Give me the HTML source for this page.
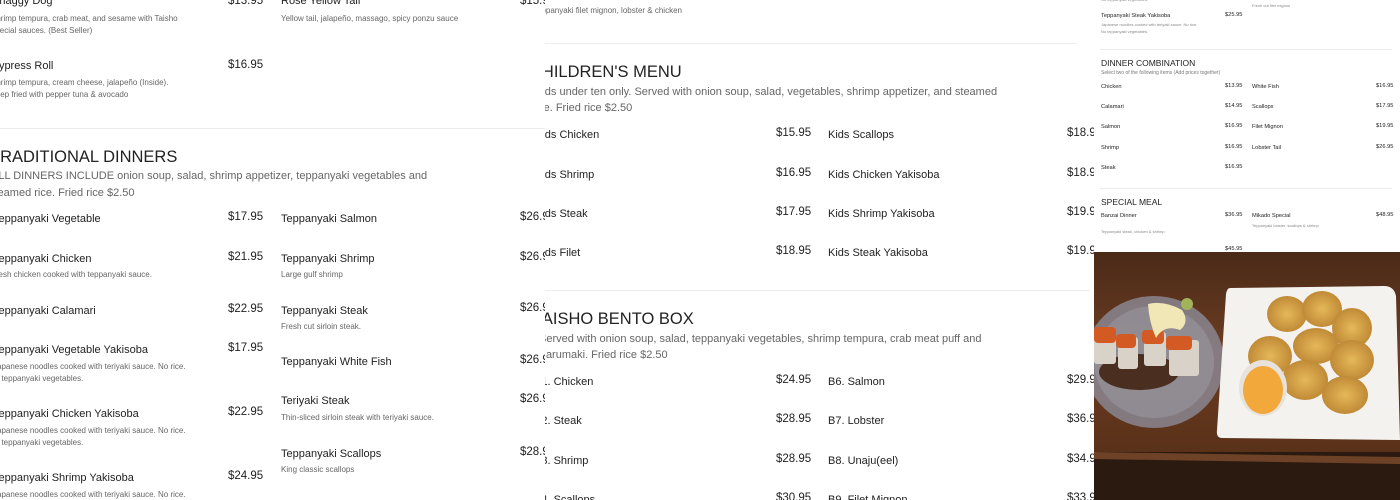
<!DOCTYPE html>
<html><head><meta charset="utf-8"><style>
*{margin:0;padding:0;box-sizing:border-box}
body{width:1400px;height:500px;overflow:hidden;background:#fff;font-family:"Liberation Sans",Arial,sans-serif;color:#222;position:relative}
.p{position:absolute;top:0;height:500px;overflow:hidden;background:#fff}
.t{position:absolute;white-space:nowrap;line-height:1}
.n{font-size:11px;color:#222}
.pr{font-size:11.5px;color:#222}
.d{font-size:8px;color:#666}
.h{font-size:16.5px;color:#222}
.s{font-size:11px;color:#666}
.hr{position:absolute;height:1px;background:#ececec}
.r .n,.r .pr{font-size:5.7px}
.r .d{font-size:4px;color:#888}
.r .h{font-size:8.5px}
.r .s{font-size:5px;color:#777}
</style></head><body>

<div class="p" style="left:0;width:545px">
<div class="t n" style="left:-8px;top:-4px">Shaggy Dog</div>
<div class="t pr" style="left:228px;top:-4px">$13.95</div>
<div class="t d" style="left:-9px;top:15px">Shrimp tempura, crab meat, and sesame with Taisho</div>
<div class="t d" style="left:-10px;top:27px">Special sauces. (Best Seller)</div>
<div class="t n" style="left:281px;top:-4px">Rose Yellow Tail</div>
<div class="t pr" style="left:520px;top:-4px">$15.95</div>
<div class="t d" style="left:281px;top:15px">Yellow tail, jalapeño, massago, spicy ponzu sauce</div>
<div class="t n" style="left:-9px;top:61px">Cypress Roll</div>
<div class="t pr" style="left:228px;top:60px">$16.95</div>
<div class="t d" style="left:-9px;top:79px">Shrimp tempura, cream cheese, jalapeño (Inside).</div>
<div class="t d" style="left:-10px;top:91px">Deep fried with pepper tuna &amp; avocado</div>
<div class="hr" style="left:0;width:545px;top:128px"></div>
<div class="t h" style="left:-10px;top:149px">TRADITIONAL DINNERS</div>
<div class="t s" style="left:-9px;top:171px">ALL DINNERS INCLUDE onion soup, salad, shrimp appetizer, teppanyaki vegetables and</div>
<div class="t s" style="left:-11px;top:188px">steamed rice. Fried rice $2.50</div>

<div class="t n" style="left:-7px;top:214px">Teppanyaki Vegetable</div><div class="t pr" style="left:228px;top:212px">$17.95</div>
<div class="t n" style="left:-7px;top:254px">Teppanyaki Chicken</div><div class="t pr" style="left:228px;top:252px">$21.95</div>
<div class="t d" style="left:-9px;top:271px">Fresh chicken cooked with teppanyaki sauce.</div>
<div class="t n" style="left:-7px;top:306px">Teppanyaki Calamari</div><div class="t pr" style="left:228px;top:304px">$22.95</div>
<div class="t n" style="left:-7px;top:345px">Teppanyaki Vegetable Yakisoba</div><div class="t pr" style="left:228px;top:343px">$17.95</div>
<div class="t d" style="left:-7px;top:363px">Japanese noodles cooked with teriyaki sauce. No rice.</div>
<div class="t d" style="left:-11px;top:375px">No teppanyaki vegetables.</div>
<div class="t n" style="left:-7px;top:409px">Teppanyaki Chicken Yakisoba</div><div class="t pr" style="left:228px;top:407px">$22.95</div>
<div class="t d" style="left:-7px;top:427px">Japanese noodles cooked with teriyaki sauce. No rice.</div>
<div class="t d" style="left:-11px;top:439px">No teppanyaki vegetables.</div>
<div class="t n" style="left:-7px;top:473px">Teppanyaki Shrimp Yakisoba</div><div class="t pr" style="left:228px;top:471px">$24.95</div>
<div class="t d" style="left:-7px;top:491px">Japanese noodles cooked with teriyaki sauce. No rice.</div>

<div class="t n" style="left:281px;top:214px">Teppanyaki Salmon</div><div class="t pr" style="left:520px;top:212px">$26.95</div>
<div class="t n" style="left:281px;top:254px">Teppanyaki Shrimp</div><div class="t pr" style="left:520px;top:252px">$26.95</div>
<div class="t d" style="left:281px;top:271px">Large gulf shrimp</div>
<div class="t n" style="left:281px;top:306px">Teppanyaki Steak</div><div class="t pr" style="left:520px;top:303px">$26.95</div>
<div class="t d" style="left:281px;top:323px">Fresh cut sirloin steak.</div>
<div class="t n" style="left:281px;top:357px">Teppanyaki White Fish</div><div class="t pr" style="left:520px;top:355px">$26.95</div>
<div class="t n" style="left:281px;top:396px">Teriyaki Steak</div><div class="t pr" style="left:520px;top:394px">$26.95</div>
<div class="t d" style="left:281px;top:414px">Thin-sliced sirloin steak with teriyaki sauce.</div>
<div class="t n" style="left:281px;top:449px">Teppanyaki Scallops</div><div class="t pr" style="left:520px;top:447px">$28.95</div>
<div class="t d" style="left:281px;top:466px">King classic scallops</div>
</div>

<div class="p" style="left:545px;width:549px">
<div style="position:absolute;left:-13px;top:0;width:560px;height:500px">
<div class="t d" style="left:1px;top:7px">Teppanyaki filet mignon, lobster &amp; chicken</div>
<div class="hr" style="left:13px;width:532px;top:43px"></div>
<div class="t h" style="left:-2px;top:64px">CHILDREN'S MENU</div>
<div class="t s" style="left:3px;top:87px">Kids under ten only. Served with onion soup, salad, vegetables, shrimp appetizer, and steamed</div>
<div class="t s" style="left:0;top:103px">rice. Fried rice $2.50</div>
</div>
<div style="position:absolute;left:-10px;top:0;width:560px;height:500px">
<div class="t n" style="left:0;top:130px">Kids Chicken</div><div class="t pr" style="left:241px;top:128px">$15.95</div>
<div class="t n" style="left:0;top:170px">Kids Shrimp</div><div class="t pr" style="left:241px;top:168px">$16.95</div>
<div class="t n" style="left:0;top:209px">Kids Steak</div><div class="t pr" style="left:241px;top:207px">$17.95</div>
<div class="t n" style="left:0;top:248px">Kids Filet</div><div class="t pr" style="left:241px;top:246px">$18.95</div>
<div class="t n" style="left:293px;top:130px">Kids Scallops</div><div class="t pr" style="left:532px;top:128px">$18.95</div>
<div class="t n" style="left:293px;top:170px">Kids Chicken Yakisoba</div><div class="t pr" style="left:532px;top:168px">$18.95</div>
<div class="t n" style="left:293px;top:209px">Kids Shrimp Yakisoba</div><div class="t pr" style="left:532px;top:207px">$19.95</div>
<div class="t n" style="left:293px;top:248px">Kids Steak Yakisoba</div><div class="t pr" style="left:532px;top:246px">$19.95</div>
</div>
<div class="hr" style="left:0;width:545px;top:290px"></div>
<div style="position:absolute;left:-8px;top:0;width:560px;height:500px">
<div class="t h" style="left:-4px;top:311px">TAISHO BENTO BOX</div>
<div class="t s" style="left:2px;top:334px">Served with onion soup, salad, teppanyaki vegetables, shrimp tempura, crab meat puff and</div>
<div class="t s" style="left:1px;top:350px">Harumaki. Fried rice $2.50</div>
<div class="t n" style="left:-3px;top:377px">B1. Chicken</div><div class="t pr" style="left:239px;top:375px">$24.95</div>
<div class="t n" style="left:-3px;top:416px">B2. Steak</div><div class="t pr" style="left:239px;top:414px">$28.95</div>
<div class="t n" style="left:-3px;top:456px">B3. Shrimp</div><div class="t pr" style="left:239px;top:454px">$28.95</div>
<div class="t n" style="left:-3px;top:495px">B4. Scallops</div><div class="t pr" style="left:239px;top:493px">$30.95</div>
<div class="t n" style="left:291px;top:377px">B6. Salmon</div><div class="t pr" style="left:530px;top:375px">$29.95</div>
<div class="t n" style="left:291px;top:416px">B7. Lobster</div><div class="t pr" style="left:530px;top:414px">$36.95</div>
<div class="t n" style="left:291px;top:456px">B8. Unaju(eel)</div><div class="t pr" style="left:530px;top:454px">$34.95</div>
<div class="t n" style="left:291px;top:495px">B9. Filet Mignon</div><div class="t pr" style="left:530px;top:493px">$33.95</div>
</div>
</div>

<div class="p r" style="left:1094px;width:306px;height:252px">
<div class="t d" style="left:7px;top:-2px">No teppanyaki vegetables.</div>
<div class="t d" style="left:158px;top:4px">Fresh cut filet mignon</div>
<div class="t n" style="left:7px;top:14px">Teppanyaki Steak Yakisoba</div><div class="t pr" style="left:131px;top:13px">$25.95</div>
<div class="t d" style="left:7px;top:23px">Japanese noodles cooked with teriyaki sauce. No rice.</div>
<div class="t d" style="left:7px;top:30px">No teppanyaki vegetables.</div>
<div class="hr" style="left:6px;width:292px;top:49px"></div>
<div class="t h" style="left:7px;top:59px">DINNER COMBINATION</div>
<div class="t s" style="left:7px;top:71px">Select two of the following items (Add prices together)</div>
<div class="t n" style="left:7px;top:85px">Chicken</div><div class="t pr" style="left:131px;top:84px">$13.95</div>
<div class="t n" style="left:7px;top:105px">Calamari</div><div class="t pr" style="left:131px;top:104px">$14.95</div>
<div class="t n" style="left:7px;top:125px">Salmon</div><div class="t pr" style="left:131px;top:124px">$16.95</div>
<div class="t n" style="left:7px;top:146px">Shrimp</div><div class="t pr" style="left:131px;top:145px">$16.95</div>
<div class="t n" style="left:7px;top:166px">Steak</div><div class="t pr" style="left:131px;top:165px">$16.95</div>
<div class="t n" style="left:158px;top:85px">White Fish</div><div class="t pr" style="left:282px;top:84px">$16.95</div>
<div class="t n" style="left:158px;top:105px">Scallops</div><div class="t pr" style="left:282px;top:104px">$17.95</div>
<div class="t n" style="left:158px;top:125px">Filet Mignon</div><div class="t pr" style="left:282px;top:124px">$19.95</div>
<div class="t n" style="left:158px;top:146px">Lobster Tail</div><div class="t pr" style="left:282px;top:145px">$26.95</div>
<div class="hr" style="left:6px;width:292px;top:188px"></div>
<div class="t h" style="left:7px;top:198px">SPECIAL MEAL</div>
<div class="t n" style="left:7px;top:214px">Banzai Dinner</div><div class="t pr" style="left:131px;top:213px">$36.95</div>
<div class="t d" style="left:7px;top:230px">Teppanyaki steak, chicken &amp; shrimp</div>
<div class="t n" style="left:158px;top:214px">Mikado Special</div><div class="t pr" style="left:282px;top:213px">$48.95</div>
<div class="t d" style="left:158px;top:224px">Teppanyaki lobster, scallops &amp; shrimp</div>
<div class="t pr" style="left:131px;top:247px">$45.95</div>
</div>

<svg style="position:absolute;left:1094px;top:252px" width="306" height="248" viewBox="0 0 306 248">
<defs>
<linearGradient id="w" x1="0" y1="0" x2="0" y2="1"><stop offset="0" stop-color="#4a2a18"/><stop offset=".4" stop-color="#6b3d22"/><stop offset=".8" stop-color="#5a3119"/><stop offset="1" stop-color="#2a1a10"/></linearGradient>
<radialGradient id="g" cx=".5" cy=".5" r=".5"><stop offset="0" stop-color="#e6b85a"/><stop offset="1" stop-color="#c08a36"/></radialGradient>
</defs>
<rect width="306" height="248" fill="url(#w)"/>
<rect x="0" y="200" width="306" height="48" fill="#2b1a10"/>
<path d="M0 200 L306 205 L306 212 L0 207Z" fill="#6e4227"/>
<ellipse cx="60" cy="110" rx="70" ry="66" fill="#8a8690" opacity=".85"/>
<ellipse cx="60" cy="110" rx="60" ry="56" fill="#9a969e" opacity=".6"/>
<ellipse cx="45" cy="120" rx="40" ry="18" fill="#4a2e20"/>
<g fill="#d8d2c8"><rect x="0" y="80" width="22" height="32" rx="3"/><rect x="24" y="85" width="20" height="32" rx="3"/><rect x="50" y="80" width="22" height="34" rx="3"/><rect x="75" y="88" width="30" height="36" rx="3"/></g>
<g fill="#d35a22"><rect x="0" y="75" width="22" height="16" rx="4"/><rect x="22" y="82" width="20" height="14" rx="4"/><rect x="48" y="78" width="22" height="14" rx="4"/><rect x="72" y="84" width="26" height="14" rx="4"/></g>
<path d="M54 52 Q70 48 88 58 Q96 70 86 78 Q70 72 62 86 Q55 70 54 52Z" fill="#f1e6b5"/>
<circle cx="93" cy="52" r="6" fill="#a3b35a"/>
<path d="M136 36 L290 34 Q300 34 302 44 L306 188 L128 186 Q122 186 123 178 L132 42 Q133 36 136 36Z" fill="#f4f2ee"/>
<g fill="url(#g)">
<ellipse cx="193" cy="62" rx="20" ry="18"/><ellipse cx="228" cy="57" rx="20" ry="18"/><ellipse cx="258" cy="76" rx="20" ry="20"/>
<ellipse cx="176" cy="104" rx="22" ry="20"/><ellipse cx="222" cy="94" rx="23" ry="18"/><ellipse cx="258" cy="108" rx="22" ry="20"/>
<ellipse cx="211" cy="128" rx="23" ry="20"/><ellipse cx="251" cy="143" rx="23" ry="19"/>
</g>
<ellipse cx="169" cy="136" rx="24" ry="28" fill="#e8e2dc"/>
<ellipse cx="169" cy="138" rx="20" ry="24" fill="#f2a83a"/>
</svg>
</body></html>
